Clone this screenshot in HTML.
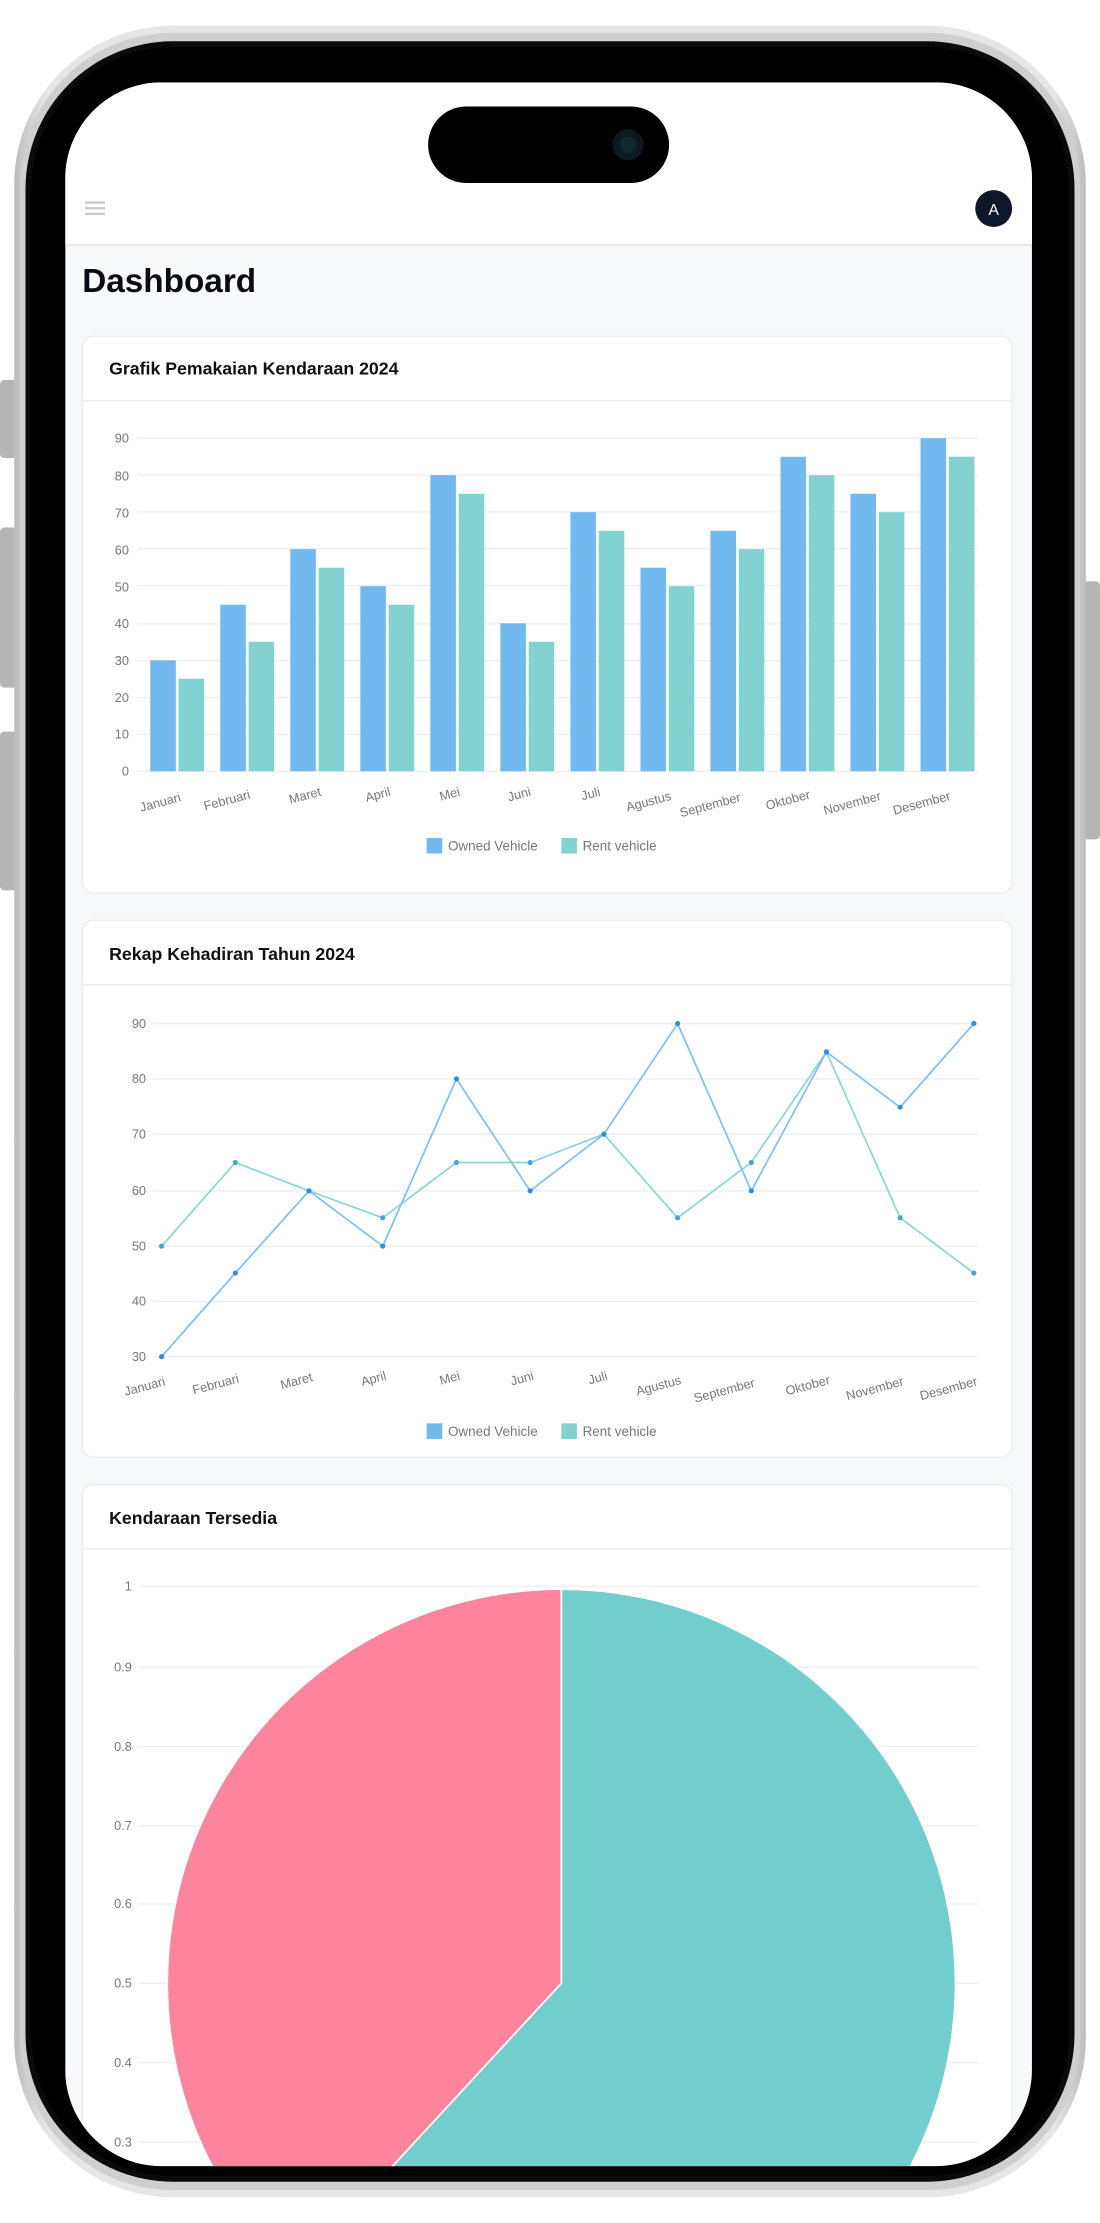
<!DOCTYPE html>
<html><head><meta charset="utf-8"><style>
html,body{margin:0;padding:0;background:#fff;width:1100px;height:2223px;overflow:hidden}
svg{display:block}
text{font-family:"Liberation Sans",sans-serif}
</style></head><body>
<svg width="1100" height="2223" viewBox="0 0 776 1568" xmlns="http://www.w3.org/2000/svg">
<defs>
<clipPath id="scr"><rect x="46" y="58" width="682" height="1470" rx="68"/></clipPath>
<linearGradient id="sil" x1="0" x2="1"><stop offset="0" stop-color="#bdbdbd"/><stop offset="0.03" stop-color="#e6e6e6"/><stop offset="0.97" stop-color="#e6e6e6"/><stop offset="1" stop-color="#bdbdbd"/></linearGradient>
</defs>
<!-- side buttons -->
<rect x="0" y="268" width="12" height="55" rx="3" fill="#b5b5b5"/>
<rect x="0" y="372" width="12" height="113" rx="3" fill="#b5b5b5"/>
<rect x="0" y="516" width="12" height="112" rx="3" fill="#b5b5b5"/>
<rect x="764" y="410" width="12" height="182" rx="3" fill="#b5b5b5"/>
<!-- frame -->
<rect x="10" y="18" width="756" height="1532" rx="112" fill="url(#sil)"/>
<rect x="14" y="23" width="748" height="1522" rx="108" fill="#cfcfcf"/>
<rect x="18" y="29" width="740" height="1510" rx="104" fill="#0a0a0a"/>
<rect x="22" y="33" width="732" height="1502" rx="100" fill="#000"/>
<g clip-path="url(#scr)">
<rect x="46" y="58" width="682" height="1470" fill="#f8f9fb"/>
<rect x="46" y="58" width="682" height="114" fill="#fff"/>
<rect x="46" y="172" width="682" height="1.5" fill="#e8e9ec"/>
<!-- hamburger -->
<rect x="60" y="142" width="14" height="1.6" fill="#c4c7cf"/>
<rect x="60" y="146" width="14" height="1.6" fill="#c4c7cf"/>
<rect x="60" y="150" width="14" height="1.6" fill="#c4c7cf"/>
<circle cx="701" cy="147" r="13" fill="#0f172a"/>
<text x="701" y="151.5" font-size="11" fill="#fff" text-anchor="middle">A</text>
<text x="58" y="206" font-size="23.5" font-weight="bold" fill="#0b0b14">Dashboard</text>

<!-- card 1 -->
<rect x="58" y="237" width="656" height="393" rx="8" fill="#fff" stroke="#eceef1"/>
<text x="77" y="264" font-size="12.5" font-weight="bold" fill="#111">Grafik Pemakaian Kendaraan 2024</text>
<rect x="58" y="282" width="656" height="1" fill="#eceef1"/>
<g font-size="9" fill="#777" text-anchor="end">
<text x="91" y="312">90</text><text x="91" y="339">80</text><text x="91" y="365">70</text><text x="91" y="391">60</text><text x="91" y="417">50</text><text x="91" y="443">40</text><text x="91" y="469">30</text><text x="91" y="495">20</text><text x="91" y="521">10</text><text x="91" y="547">0</text>
</g>
<g stroke="#eeeff1" stroke-width="1">
<line x1="97" y1="309" x2="690" y2="309"/><line x1="97" y1="335" x2="690" y2="335"/><line x1="97" y1="361" x2="690" y2="361"/><line x1="97" y1="387" x2="690" y2="387"/><line x1="97" y1="413" x2="690" y2="413"/><line x1="97" y1="440" x2="690" y2="440"/><line x1="97" y1="466" x2="690" y2="466"/><line x1="97" y1="492" x2="690" y2="492"/><line x1="97" y1="518" x2="690" y2="518"/><line x1="97" y1="544" x2="690" y2="544"/>
</g>
<g fill="#71b9ee">
<rect x="106" y="465.7" width="18" height="78.3"/><rect x="155.4" y="426.5" width="18" height="117.5"/><rect x="204.8" y="387.3" width="18" height="156.7"/><rect x="254.2" y="413.4" width="18" height="130.6"/><rect x="303.6" y="335.1" width="18" height="208.9"/><rect x="353" y="439.6" width="18" height="104.4"/><rect x="402.4" y="361.2" width="18" height="182.8"/><rect x="451.8" y="400.4" width="18" height="143.6"/><rect x="501.2" y="374.3" width="18" height="169.7"/><rect x="550.6" y="322.1" width="18" height="221.9"/><rect x="600" y="348.2" width="18" height="195.8"/><rect x="649.4" y="309" width="18" height="235"/>
</g>
<g fill="#82d2d2">
<rect x="126" y="478.7" width="18" height="65.3"/><rect x="175.4" y="452.6" width="18" height="91.4"/><rect x="224.8" y="400.4" width="18" height="143.6"/><rect x="274.2" y="426.5" width="18" height="117.5"/><rect x="323.6" y="348.2" width="18" height="195.8"/><rect x="373" y="452.6" width="18" height="91.4"/><rect x="422.4" y="374.3" width="18" height="169.7"/><rect x="471.8" y="413.4" width="18" height="130.6"/><rect x="521.2" y="387.3" width="18" height="156.7"/><rect x="570.6" y="335.1" width="18" height="208.9"/><rect x="620" y="361.2" width="18" height="182.8"/><rect x="669.4" y="322.1" width="18" height="221.9"/>
</g>
<g font-size="9" fill="#777" text-anchor="end">
<text transform="translate(128,565) rotate(-15)">Januari</text>
<text transform="translate(177,563) rotate(-15)">Februari</text>
<text transform="translate(227,561) rotate(-15)">Maret</text>
<text transform="translate(276,561) rotate(-15)">April</text>
<text transform="translate(325,561) rotate(-15)">Mei</text>
<text transform="translate(375,561) rotate(-15)">Juni</text>
<text transform="translate(424,561) rotate(-15)">Juli</text>
<text transform="translate(474,564) rotate(-15)">Agustus</text>
<text transform="translate(523,565) rotate(-15)">September</text>
<text transform="translate(572,563) rotate(-15)">Oktober</text>
<text transform="translate(622,564) rotate(-15)">November</text>
<text transform="translate(671,564) rotate(-15)">Desember</text>
</g>
<rect x="301" y="591" width="11" height="11" fill="#71b9ee"/>
<text x="316" y="600" font-size="9.5" fill="#777">Owned Vehicle</text>
<rect x="396" y="591" width="11" height="11" fill="#82d2d2"/>
<text x="411" y="600" font-size="9.5" fill="#777">Rent vehicle</text>

<!-- card 2 -->
<rect x="58" y="649" width="656" height="379" rx="8" fill="#fff" stroke="#eceef1"/>
<text x="77" y="677" font-size="12.5" font-weight="bold" fill="#111">Rekap Kehadiran Tahun 2024</text>
<rect x="58" y="694" width="656" height="1" fill="#eceef1"/>
<g font-size="9" fill="#777" text-anchor="end">
<text x="103" y="725">90</text><text x="103" y="764">80</text><text x="103" y="803">70</text><text x="103" y="843">60</text><text x="103" y="882">50</text><text x="103" y="921">40</text><text x="103" y="960">30</text>
</g>
<g stroke="#eeeff1">
<line x1="108" y1="722" x2="690" y2="722"/><line x1="108" y1="761" x2="690" y2="761"/><line x1="108" y1="800" x2="690" y2="800"/><line x1="108" y1="840" x2="690" y2="840"/><line x1="108" y1="879" x2="690" y2="879"/><line x1="108" y1="918" x2="690" y2="918"/><line x1="108" y1="957" x2="690" y2="957"/>
</g>
<polyline fill="none" stroke="#8ad6d6" stroke-width="1.2" points="114,879 166,820 218,840 270,859 322,820 374,820 426,800 478,859 530,820 583,742 635,859 687,898"/>
<polyline fill="none" stroke="#7cc0f0" stroke-width="1.2" points="114,957 166,898 218,840 270,879 322,761 374,840 426,800 478,722 530,840 583,742 635,781 687,722"/>
<g fill="#3fa7cf">
<circle cx="114" cy="879" r="1.8"/><circle cx="166" cy="820" r="1.8"/><circle cx="218" cy="840" r="1.8"/><circle cx="270" cy="859" r="1.8"/><circle cx="322" cy="820" r="1.8"/><circle cx="374" cy="820" r="1.8"/><circle cx="426" cy="800" r="1.8"/><circle cx="478" cy="859" r="1.8"/><circle cx="530" cy="820" r="1.8"/><circle cx="583" cy="742" r="1.8"/><circle cx="635" cy="859" r="1.8"/><circle cx="687" cy="898" r="1.8"/>
</g>
<g fill="#2a8fe0">
<circle cx="114" cy="957" r="1.8"/><circle cx="166" cy="898" r="1.8"/><circle cx="218" cy="840" r="1.8"/><circle cx="270" cy="879" r="1.8"/><circle cx="322" cy="761" r="1.8"/><circle cx="374" cy="840" r="1.8"/><circle cx="426" cy="800" r="1.8"/><circle cx="478" cy="722" r="1.8"/><circle cx="530" cy="840" r="1.8"/><circle cx="583" cy="742" r="1.8"/><circle cx="635" cy="781" r="1.8"/><circle cx="687" cy="722" r="1.8"/>
</g>
<g font-size="9" fill="#777" text-anchor="end">
<text transform="translate(117,977) rotate(-15)">Januari</text>
<text transform="translate(169,975) rotate(-15)">Februari</text>
<text transform="translate(221,974) rotate(-15)">Maret</text>
<text transform="translate(273,973) rotate(-15)">April</text>
<text transform="translate(325,973) rotate(-15)">Mei</text>
<text transform="translate(377,973) rotate(-15)">Juni</text>
<text transform="translate(429,973) rotate(-15)">Juli</text>
<text transform="translate(481,976) rotate(-15)">Agustus</text>
<text transform="translate(533,978) rotate(-15)">September</text>
<text transform="translate(586,976) rotate(-15)">Oktober</text>
<text transform="translate(638,977) rotate(-15)">November</text>
<text transform="translate(690,977) rotate(-15)">Desember</text>
</g>
<rect x="301" y="1004" width="11" height="11" fill="#71b9ee"/>
<text x="316" y="1013" font-size="9.5" fill="#777">Owned Vehicle</text>
<rect x="396" y="1004" width="11" height="11" fill="#82d2d2"/>
<text x="411" y="1013" font-size="9.5" fill="#777">Rent vehicle</text>

<!-- card 3 -->
<rect x="58" y="1047" width="656" height="600" rx="8" fill="#fff" stroke="#eceef1"/>
<text x="77" y="1075" font-size="12.5" font-weight="bold" fill="#111">Kendaraan Tersedia</text>
<rect x="58" y="1092" width="656" height="1" fill="#eceef1"/>
<g font-size="9" fill="#777" text-anchor="end">
<text x="93" y="1122">1</text><text x="93" y="1179">0.9</text><text x="93" y="1235">0.8</text><text x="93" y="1291">0.7</text><text x="93" y="1346">0.6</text><text x="93" y="1402">0.5</text><text x="93" y="1458">0.4</text><text x="93" y="1514">0.3</text><text x="93" y="1570">0.2</text>
</g>
<g stroke="#eeeff1">
<line x1="98" y1="1119" x2="690" y2="1119"/><line x1="98" y1="1176" x2="690" y2="1176"/><line x1="98" y1="1232" x2="690" y2="1232"/><line x1="98" y1="1288" x2="690" y2="1288"/><line x1="98" y1="1343" x2="690" y2="1343"/><line x1="98" y1="1399" x2="690" y2="1399"/><line x1="98" y1="1455" x2="690" y2="1455"/><line x1="98" y1="1511" x2="690" y2="1511"/>
</g>
<path d="M396,1399 L396,1121 A278,278 0 0 0 207.5,1603.3 Z" fill="#fe849d" stroke="#fff" stroke-width="1.2"/>
<path d="M396,1399 L396,1121 A278,278 0 1 1 207.5,1603.3 Z" fill="#72cdcd" stroke="#fff" stroke-width="1.2"/>
</g>
<!-- dynamic island -->
<rect x="302" y="75" width="170" height="54" rx="27" fill="#000"/>
<circle cx="443" cy="102" r="11" fill="#0b1a1f"/>
<circle cx="443" cy="102" r="6" fill="#12282c"/>
</svg>
</body></html>
